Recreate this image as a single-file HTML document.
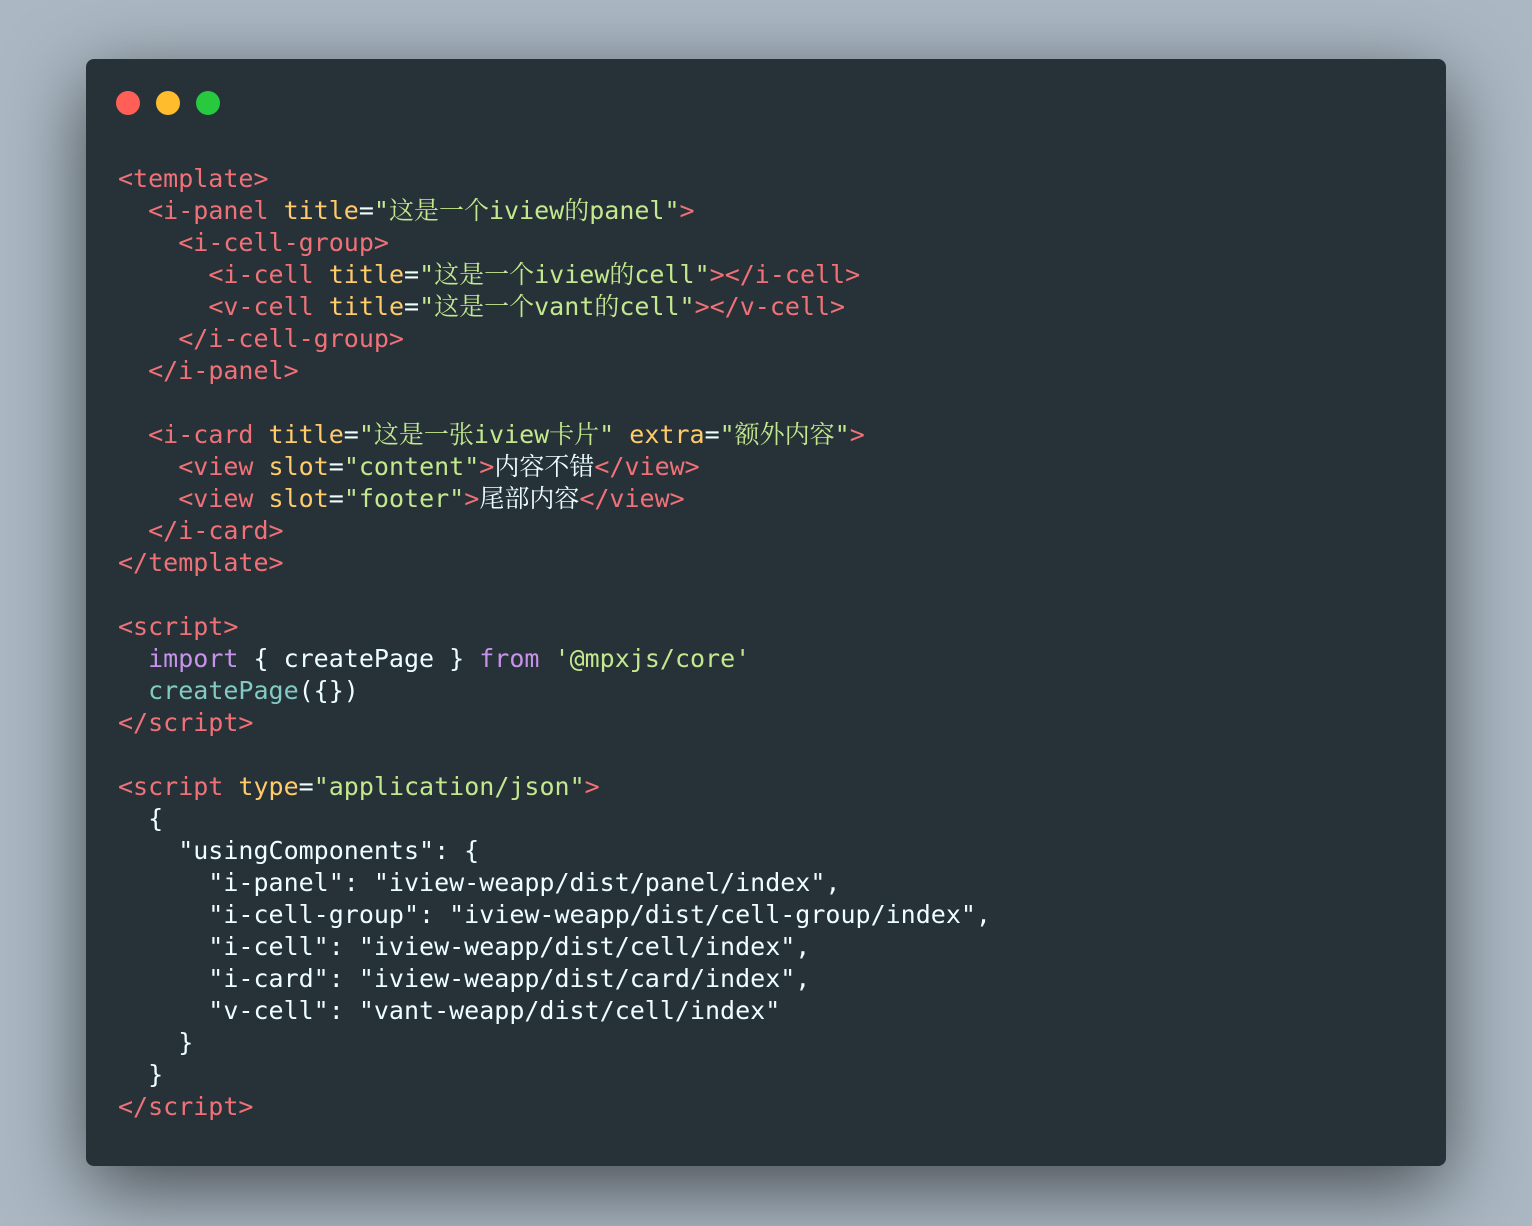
<!DOCTYPE html>
<html><head><meta charset="utf-8"><style>
html,body{margin:0;padding:0;}
body{width:1532px;height:1226px;background:#abb8c3;position:relative;overflow:hidden;}
.win{position:absolute;left:86px;top:59px;width:1360px;height:1107px;background:#263238;border-radius:8px;box-shadow:0 22px 80px rgba(0,0,0,0.6);}
.dot{position:absolute;top:91px;width:24px;height:24px;border-radius:50%;}
pre{position:absolute;left:118px;top:163px;margin:0;font-family:"DejaVu Sans Mono","Liberation Mono","Noto Serif CJK SC",monospace;font-size:25px;line-height:32px;color:#eeffff;}
.t{color:#f07178}.a{color:#ffcb6b}.s{color:#c3e88d}.k{color:#c792ea}.f{color:#82cbc4}
</style></head><body>
<div class="win"></div>
<div class="dot" style="left:116px;background:#ff5f56"></div>
<div class="dot" style="left:156px;background:#ffbd2e"></div>
<div class="dot" style="left:196px;background:#27c93f"></div>
<pre><span class="t">&lt;template&gt;</span>
  <span class="t">&lt;i-panel</span> <span class="a">title</span>=<span class="s">"这是一个iview的panel"</span><span class="t">&gt;</span>
    <span class="t">&lt;i-cell-group&gt;</span>
      <span class="t">&lt;i-cell</span> <span class="a">title</span>=<span class="s">"这是一个iview的cell"</span><span class="t">&gt;&lt;/i-cell&gt;</span>
      <span class="t">&lt;v-cell</span> <span class="a">title</span>=<span class="s">"这是一个vant的cell"</span><span class="t">&gt;&lt;/v-cell&gt;</span>
    <span class="t">&lt;/i-cell-group&gt;</span>
  <span class="t">&lt;/i-panel&gt;</span>

  <span class="t">&lt;i-card</span> <span class="a">title</span>=<span class="s">"这是一张iview卡片"</span> <span class="a">extra</span>=<span class="s">"额外内容"</span><span class="t">&gt;</span>
    <span class="t">&lt;view</span> <span class="a">slot</span>=<span class="s">"content"</span><span class="t">&gt;</span>内容不错<span class="t">&lt;/view&gt;</span>
    <span class="t">&lt;view</span> <span class="a">slot</span>=<span class="s">"footer"</span><span class="t">&gt;</span>尾部内容<span class="t">&lt;/view&gt;</span>
  <span class="t">&lt;/i-card&gt;</span>
<span class="t">&lt;/template&gt;</span>

<span class="t">&lt;script&gt;</span>
  <span class="k">import</span> { createPage } <span class="k">from</span> <span class="s">'@mpxjs/core'</span>
  <span class="f">createPage</span>({})
<span class="t">&lt;/script&gt;</span>

<span class="t">&lt;script</span> <span class="a">type</span>=<span class="s">"application/json"</span><span class="t">&gt;</span>
  {
    "usingComponents": {
      "i-panel": "iview-weapp/dist/panel/index",
      "i-cell-group": "iview-weapp/dist/cell-group/index",
      "i-cell": "iview-weapp/dist/cell/index",
      "i-card": "iview-weapp/dist/card/index",
      "v-cell": "vant-weapp/dist/cell/index"
    }
  }
<span class="t">&lt;/script&gt;</span></pre>
</body></html>
